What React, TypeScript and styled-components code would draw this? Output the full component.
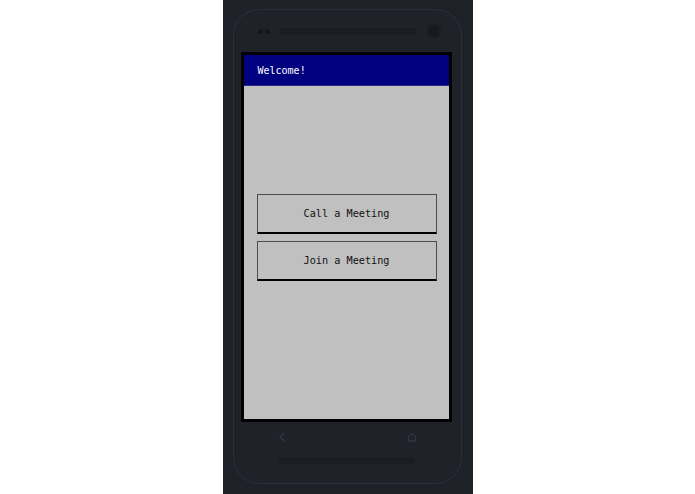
import React from 'react';
import styled, { createGlobalStyle } from 'styled-components';

const GlobalStyle = createGlobalStyle`
    html, body {
        margin: 0;
        padding: 0;
        background: #ffffff;
    }
    body {
        font-family: "DejaVu Sans Mono", "Liberation Mono", monospace;
    }
`;

const Page = styled.div`
    width: 695px;
    height: 494px;
    display: flex;
    justify-content: center;
    overflow: hidden;
`;

const Strip = styled.div`
    width: 250px;
    height: 494px;
    background: #1f2129;
    padding: 9px 11px 0 10px;
    box-sizing: border-box;
`;

const Phone = styled.div`
    height: 475px;
    border: 1px solid #2c2f38;
    border-radius: 26px;
    background: #20222a;
    box-sizing: border-box;
    display: flex;
    flex-direction: column;
`;

const TopBar = styled.div`
    height: 42px;
    display: flex;
    align-items: center;
    padding: 0 0 0 24px;
    gap: 10px;
    box-sizing: border-box;
`;

const Dots = styled.div`
    display: flex;
    gap: 2px;
`;

const Dot = styled.span`
    width: 5px;
    height: 5px;
    border-radius: 50%;
    background: #15161c;
`;

const Grille = styled.div<{ $height: number }>`
    width: 136px;
    height: ${(p) => p.$height}px;
    background-image: radial-gradient(circle, #191b21 0.6px, transparent 0.9px);
    background-size: 2px 2px;
`;

const Camera = styled.span`
    width: 14px;
    height: 14px;
    border-radius: 50%;
    background: #18191f;
    box-shadow: inset 0 0 0 2px #1c1d24;
    margin-left: 1px;
`;

const Screen = styled.div`
    margin: 0 9px 0 7px;
    height: 370px;
    border: 3px solid #000000;
    background: #c0c0c0;
    box-sizing: border-box;
    display: flex;
    flex-direction: column;
`;

const Header = styled.div`
    height: 31px;
    background: #000080;
    color: #ffffff;
    font-size: 10px;
    font-weight: 500;
    display: flex;
    align-items: center;
    padding-left: 14px;
    box-sizing: border-box;
    border-bottom: 1px solid #2a2a8a;
`;

const Content = styled.div`
    flex: 1;
    display: flex;
    flex-direction: column;
    gap: 7px;
    padding: 108px 12px 0 13px;
`;

const Button = styled.button`
    height: 40px;
    width: 100%;
    background: #c0c0c0;
    border: 1px solid #4c4c4c;
    border-bottom: 2px solid #000000;
    font-family: "DejaVu Sans Mono", "Liberation Mono", monospace;
    font-size: 10.2px;
    color: #111111;
    padding: 0;
    margin: 0;
    cursor: pointer;
`;

const NavBar = styled.div`
    height: 30px;
    display: flex;
    align-items: center;
    justify-content: space-between;
    padding: 0 44px 0 44px;
    box-sizing: border-box;
`;

const Bottom = styled.div`
    display: flex;
    justify-content: center;
    padding-top: 5px;
`;

const Icon = styled.svg`
    display: block;
`;

export default function App() {
    return (
        <Page>
            <GlobalStyle />
            <Strip>
                <Phone>
                    <TopBar>
                        <Dots>
                            <Dot />
                            <Dot />
                        </Dots>
                        <Grille $height={7} />
                        <Camera />
                    </TopBar>
                    <Screen>
                        <Header>Welcome!</Header>
                        <Content>
                            <Button>Call a Meeting</Button>
                            <Button>Join a Meeting</Button>
                        </Content>
                    </Screen>
                    <NavBar>
                        <Icon width="8" height="12" viewBox="0 0 8 12">
                            <path d="M6 2 L2 6 L6 10" fill="none" stroke="#33363f" strokeWidth="1.6" />
                        </Icon>
                        <Icon width="10" height="10" viewBox="0 0 10 10">
                            <path d="M1.5 9 V4.5 L5 1.5 L8.5 4.5 V9 Z" fill="none" stroke="#33363f" strokeWidth="1.3" />
                        </Icon>
                    </NavBar>
                    <Bottom>
                        <Grille $height={7} />
                    </Bottom>
                </Phone>
            </Strip>
        </Page>
    );
}
